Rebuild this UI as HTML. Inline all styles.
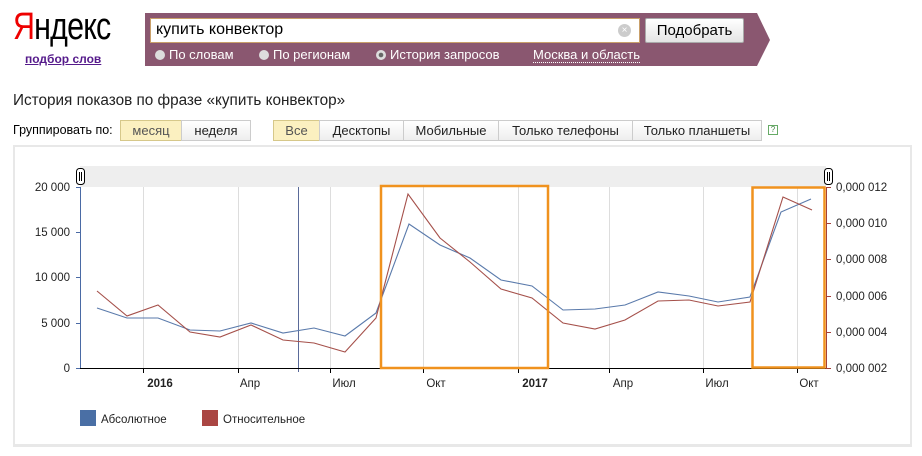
<!DOCTYPE html>
<html><head><meta charset="utf-8"><style>
*{margin:0;padding:0;box-sizing:border-box}
body{width:922px;height:456px;background:#fff;font-family:"Liberation Sans",Arial,sans-serif;position:relative;overflow:hidden;color:#000}
.a{position:absolute}
.logo{left:13px;top:6px;font-size:38px;letter-spacing:-1px;transform:scaleX(0.8);transform-origin:left}
.sub{left:25px;top:52px;font-size:12px;font-weight:bold;color:#551a8b;text-decoration:underline}
.inp{left:150px;top:18px;width:490px;height:25px;background:#fff;border:1px solid #c9a06a;font-size:16px;padding:2px 5px;color:#000}
.btn{left:645px;top:18px;width:99px;height:25px;background:linear-gradient(#fff,#e4e4e4);border:1px solid #aaa;border-radius:2px;font-size:15px;text-align:center;line-height:23px}
.rad{top:47px;font-size:13px;color:#fff}
.rad i{display:inline-block;width:10px;height:10px;border-radius:50%;background:#ddd;margin-right:4px;vertical-align:-1px}
.title{left:13px;top:92px;font-size:15.3px;color:#222}
.grp{top:120px;height:21px;font-size:13px}
.seg{position:absolute;top:0;height:21px;line-height:19px;border:1px solid #ccc;text-align:center;background:linear-gradient(#fff,#eee);color:#222}
.seg.on{background:#fbf0c0;color:#555;border-color:#d6c88a}
.box{left:13px;top:145px;width:899px;height:302px;border:2px solid #e8e8e8;border-bottom-width:3px}
</style></head><body>
<div class="a logo"><span style="color:#e00">Я</span>ндекс</div>
<div class="a sub">подбор слов</div>
<svg class="a" style="left:145px;top:13px" width="630" height="54"><polygon points="0,0 612,0 625,27 612,53 0,53" fill="#8a5770"/></svg>
<div class="a inp">купить конвектор<span style="position:absolute;right:8px;top:5px;width:13px;height:13px;border-radius:50%;background:#ccc;color:#fff;font-size:10px;line-height:13px;text-align:center">×</span></div>
<div class="a btn">Подобрать</div>
<div class="a rad" style="left:155px"><i></i>По словам</div>
<div class="a rad" style="left:259px"><i></i>По регионам</div>
<div class="a rad" style="left:376px"><i style="background:radial-gradient(#666 30%,#ddd 35%)"></i>История запросов</div>
<div class="a rad" style="left:533px;border-bottom:1px dotted #fff;line-height:15px">Москва и область</div>
<div class="a title">История показов по фразе «купить конвектор»</div>
<div class="a grp" style="left:13px;line-height:21px;font-size:12.5px">Группировать по:</div>
<div class="a grp" style="left:0;top:120px">
<span class="seg on" style="left:120px;width:62px">месяц</span><span class="seg" style="left:181px;width:70px">неделя</span>
<span class="seg on" style="left:273px;width:47px">Все</span><span class="seg" style="left:319px;width:85px">Десктопы</span><span class="seg" style="left:403px;width:96px">Мобильные</span><span class="seg" style="left:498px;width:135px">Только телефоны</span><span class="seg" style="left:632px;width:130px">Только планшеты</span></div>
<div class="a" style="left:768px;top:125px;width:10px;height:10px;border:1px solid #6a6;font-size:8px;line-height:8px;text-align:center;color:#484">?</div>
<div class="a box"></div>
<svg class="a" style="left:0;top:0" width="922" height="456" font-family="Liberation Sans,Arial,sans-serif" font-size="11.5">
<rect x="80" y="166" width="746" height="21" fill="#eee"/>
<g stroke="#ddd" stroke-width="1">
<line x1="143.5" y1="187" x2="143.5" y2="368"/><line x1="238.5" y1="187" x2="238.5" y2="368"/><line x1="330.5" y1="187" x2="330.5" y2="368"/><line x1="423.5" y1="187" x2="423.5" y2="368"/><line x1="518.5" y1="187" x2="518.5" y2="368"/><line x1="609.5" y1="187" x2="609.5" y2="368"/><line x1="703.5" y1="187" x2="703.5" y2="368"/><line x1="797.5" y1="187" x2="797.5" y2="368"/>
</g>
<line x1="298.5" y1="187" x2="298.5" y2="372" stroke="#5a6a99"/>
<line x1="80.5" y1="187" x2="80.5" y2="368" stroke="#4a6aa5"/>
<line x1="826.5" y1="187" x2="826.5" y2="368" stroke="#a5403a"/>
<line x1="80" y1="368.5" x2="826" y2="368.5" stroke="#000"/>
<g stroke="#000"><line x1="143.5" y1="368" x2="143.5" y2="373"/><line x1="238.5" y1="368" x2="238.5" y2="373"/><line x1="330.5" y1="368" x2="330.5" y2="373"/><line x1="423.5" y1="368" x2="423.5" y2="373"/><line x1="518.5" y1="368" x2="518.5" y2="373"/><line x1="609.5" y1="368" x2="609.5" y2="373"/><line x1="703.5" y1="368" x2="703.5" y2="373"/><line x1="797.5" y1="368" x2="797.5" y2="373"/></g>
<g stroke="#4a6aa5"><line x1="76" y1="187.5" x2="80" y2="187.5"/><line x1="76" y1="232.5" x2="80" y2="232.5"/><line x1="76" y1="277.5" x2="80" y2="277.5"/><line x1="76" y1="323.5" x2="80" y2="323.5"/><line x1="76" y1="368.5" x2="80" y2="368.5"/></g>
<g stroke="#a5403a"><line x1="826" y1="187.5" x2="831" y2="187.5"/><line x1="826" y1="223.5" x2="831" y2="223.5"/><line x1="826" y1="259.5" x2="831" y2="259.5"/><line x1="826" y1="296.5" x2="831" y2="296.5"/><line x1="826" y1="332.5" x2="831" y2="332.5"/><line x1="826" y1="368.5" x2="831" y2="368.5"/></g>
<g text-anchor="end" fill="#222"><text x="70" y="191">20 000</text><text x="70" y="236">15 000</text><text x="70" y="281">10 000</text><text x="70" y="327">5 000</text><text x="70" y="372">0</text></g>
<g fill="#222"><text x="836" y="191">0,000 012</text><text x="836" y="227">0,000 010</text><text x="836" y="263">0,000 008</text><text x="836" y="300">0,000 006</text><text x="836" y="336">0,000 004</text><text x="836" y="372">0,000 002</text></g>
<g text-anchor="middle" fill="#222"><text x="160" y="387" font-weight="bold">2016</text><text x="250" y="387">Апр</text><text x="344" y="387">Июл</text><text x="436" y="387">Окт</text><text x="535" y="387" font-weight="bold">2017</text><text x="623" y="387">Апр</text><text x="717" y="387">Июл</text><text x="809" y="387">Окт</text></g>
<polyline fill="none" stroke="#5a7aab" stroke-width="1.1" points="97,308 127,318 158,318 190,330 220,331 251,323 283,333 314,328 345,336 376,313 409,224 440,245 470,258 501,280 532,286 563,310 595,309 625,305 658,292 689,296 718,302 750,297 781,212 811,199"/>
<polyline fill="none" stroke="#a5504a" stroke-width="1.1" points="97,291 127,316 158,305 190,332 220,337 251,325 283,340 314,343 345,352 376,318 408,194 440,238 470,262 501,289 532,298 563,323 595,329 625,320 658,301 689,300 718,306 750,302 783,197 812,210"/>
<rect x="381" y="186" width="167" height="182" fill="none" stroke="#f0921e" stroke-width="2.5"/>
<rect x="752.5" y="187.5" width="72" height="180" fill="none" stroke="#f0921e" stroke-width="2.5"/>
<rect x="76.5" y="168.5" width="8" height="16" rx="3" fill="#fff" stroke="#000"/><line x1="79.5" y1="172" x2="79.5" y2="181" stroke="#000"/><line x1="81.5" y1="172" x2="81.5" y2="181" stroke="#000"/>
<rect x="824.5" y="168.5" width="8" height="16" rx="3" fill="#fff" stroke="#000"/><line x1="827.5" y1="172" x2="827.5" y2="181" stroke="#000"/><line x1="829.5" y1="172" x2="829.5" y2="181" stroke="#000"/>
<rect x="80" y="410" width="16" height="16" fill="#4a6fa5"/><text x="101" y="423" fill="#222">Абсолютное</text>
<rect x="202" y="410" width="16" height="16" fill="#aa4643"/><text x="223" y="423" fill="#222">Относительное</text>
</svg>
</body></html>
